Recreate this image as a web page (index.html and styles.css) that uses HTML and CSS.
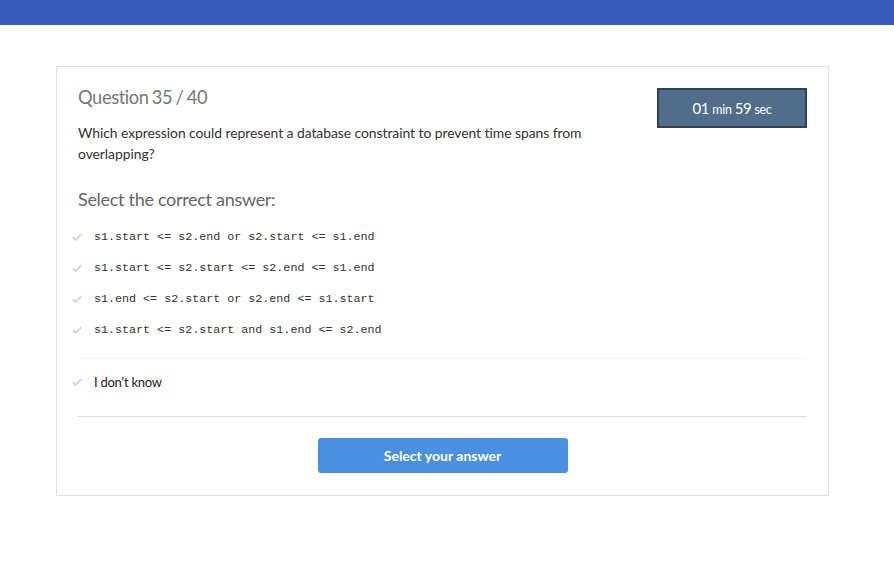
FILE: index.html
```html
<!DOCTYPE html>
<html>
<head>
<meta charset="utf-8">
<link rel="stylesheet" href="styles.css">
</head>
<body>
<div class="topbar"></div>
<main class="page">
  <section class="card">
    <div class="head">
      <div class="head-left">
        <h1 class="qnum">Question 35 / 40</h1>
        <p class="qtext">Which expression could represent a database constraint to prevent time spans from overlapping?</p>
      </div>
      <div class="timer"><span class="big">01</span><span class="small">min</span><span class="big">59</span><span class="small">sec</span></div>
    </div>
    <h2 class="select">Select the correct answer:</h2>
    <ul class="options">
      <li class="opt"><svg class="chk" viewBox="0 0 10 8"><path d="M0.8 4.2 L3.6 7 L9.2 1.2" fill="none" stroke="#d6d6d6" stroke-width="2"/></svg><code>s1.start &lt;= s2.end or s2.start &lt;= s1.end</code></li>
      <li class="opt"><svg class="chk" viewBox="0 0 10 8"><path d="M0.8 4.2 L3.6 7 L9.2 1.2" fill="none" stroke="#d6d6d6" stroke-width="2"/></svg><code>s1.start &lt;= s2.start &lt;= s2.end &lt;= s1.end</code></li>
      <li class="opt"><svg class="chk" viewBox="0 0 10 8"><path d="M0.8 4.2 L3.6 7 L9.2 1.2" fill="none" stroke="#d6d6d6" stroke-width="2"/></svg><code>s1.end &lt;= s2.start or s2.end &lt;= s1.start</code></li>
      <li class="opt"><svg class="chk" viewBox="0 0 10 8"><path d="M0.8 4.2 L3.6 7 L9.2 1.2" fill="none" stroke="#d6d6d6" stroke-width="2"/></svg><code>s1.start &lt;= s2.start and s1.end &lt;= s2.end</code></li>
    </ul>
    <div class="idk-wrap">
      <div class="idk"><svg class="chk" viewBox="0 0 10 8"><path d="M0.8 4.2 L3.6 7 L9.2 1.2" fill="none" stroke="#d6d6d6" stroke-width="2"/></svg><span>I don't know</span></div>
    </div>
    <div class="footer">
      <button class="submit">Select your answer</button>
    </div>
  </section>
</main>
</body>
</html>
```

FILE: styles.css
```css
* { box-sizing: border-box; }
html, body { margin: 0; padding: 0; background: #fff; }
body { font-family: Lato, "Open Sans", sans-serif; color: #333; }
.topbar { height: 25px; background: #375abd; }
.page { padding: 41px 65px 0 56px; }
.card {
  width: 773px;
  border: 1px solid #dedede;
  padding: 18px 21px 22px 21px;
}
.head { display: flex; justify-content: space-between; align-items: flex-start; }
.head-left { width: 540px; }
.qnum { margin: 0; font-weight: 400; font-size: 18.3px; line-height: 24px; color: #777; letter-spacing: -0.4px; word-spacing: -1px; }
.qtext { margin: 13px 0 0; font-size: 13.9px; line-height: 21px; color: #333; letter-spacing: -0.05px; }
.timer {
  margin-top: 3px;
  width: 150px; height: 40px;
  background: #506e8a;
  border: 2px solid #2f4254;
  color: #fff;
  display: flex; align-items: baseline; justify-content: center;
  padding-top: 9px;
  gap: 3px;
}
.timer .big { font-size: 15px; letter-spacing: -0.3px; }
.timer .small { font-size: 12.5px; letter-spacing: -0.3px; }
.select { margin: 23px 0 0; font-weight: 400; font-size: 18px; line-height: 24px; color: #666; letter-spacing: -0.3px; }
.options { list-style: none; margin: 10px 0 0; padding: 0 0 13px; border-bottom: 1px solid #f2f2f2; }
.opt { display: flex; align-items: center; height: 31px; margin-left: -6px; }
.chk { width: 10px; height: 8px; margin-right: 12px; flex: none; }
code { font-family: "Liberation Mono", monospace; font-size: 11.7px; color: #333; }
.idk-wrap { border-bottom: 1px solid #ddd; padding-bottom: 11px; }
.idk { display: flex; align-items: center; height: 46px; margin-left: -6px; font-size: 13px; color: #222; letter-spacing: -0.25px; }
.footer { display: flex; justify-content: center; padding-top: 21px; }
.submit {
  width: 250px; height: 35px;
  background: #4a90e2; color: #fff;
  border: 0; border-radius: 3px;
  font-family: Lato, sans-serif; font-weight: 700; font-size: 14px;
}
```
